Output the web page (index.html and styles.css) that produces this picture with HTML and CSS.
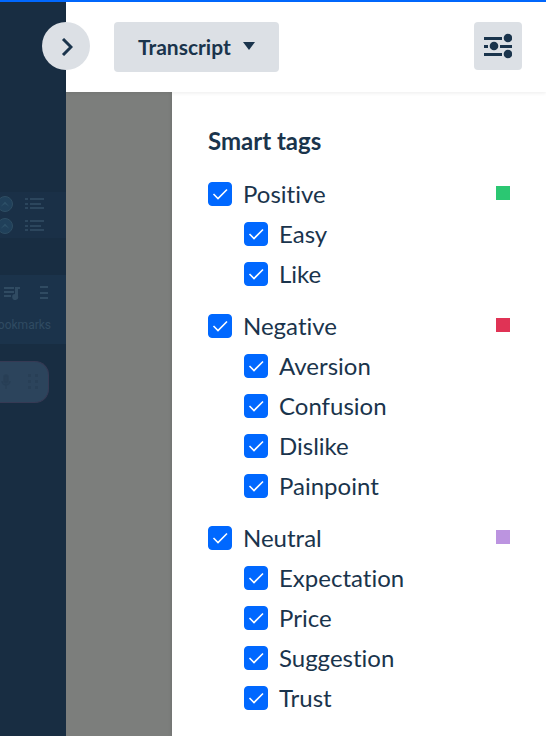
FILE: index.html
```html
<!DOCTYPE html>
<html lang="en">
<head>
  <meta charset="UTF-8">
  <meta name="viewport" content="width=device-width, initial-scale=1.0">
  <title>Transcript</title>
  <link rel="stylesheet" href="styles.css">
</head>
<body>
  <div class="page">
    <aside class="preview">
      <div class="preview-list">
        <div class="preview-row">
          <span class="compass"><svg width="16" height="16" viewBox="0 0 16 16"><path d="M3 11l5-6 5 6-5-3z" fill="#2d5068"/></svg></span>
          <svg width="20" height="12" viewBox="0 0 20 12" fill="#2c465d"><path d="M0 0h3v2H0zM5 0h14v2H5zM0 5h3v2H0zM5 5h11v2H5zM0 9h3v2H0zM5 9h14v2H5z"/></svg>
        </div>
        <div class="preview-row">
          <span class="compass"><svg width="16" height="16" viewBox="0 0 16 16"><path d="M3 11l5-6 5 6-5-3z" fill="#2d5068"/></svg></span>
          <svg width="20" height="12" viewBox="0 0 20 12" fill="#2c465d"><path d="M0 0h3v2H0zM5 0h14v2H5zM0 5h3v2H0zM5 5h11v2H5zM0 9h3v2H0zM5 9h14v2H5z"/></svg>
        </div>
      </div>
      <div class="preview-tabs">
        <div class="preview-icons">
          <svg width="16" height="14" viewBox="0 0 16 14" fill="#304b62"><path d="M0 1h10v2H0zM0 5h10v2H0zM0 9h7v2H0zM11 1h5v2h-2v7a3 3 0 1 1-3-2z"/></svg>
          <svg width="9" height="14" viewBox="0 0 9 14" fill="#304b62"><path d="M1 0h8v2H1zM1 6h8v2H1zM1 11h8v2H1z"/></svg>
        </div>
        <span class="preview-label">Bookmarks</span>
      </div>
      <div class="preview-recorder">
        <svg width="12" height="16" viewBox="0 0 12 16" fill="none" stroke="#283f56" stroke-width="1.5"><rect x="4" y="1" width="4" height="8" rx="2" fill="#283f56"/><path d="M2 7a4 4 0 0 0 8 0M6 11v4"/></svg>
        <svg width="12" height="16" viewBox="0 0 12 16" fill="#283f56"><path d="M1 0h3v3H1zM8 0h3v3H8zM1 6h3v3H1zM8 6h3v3H8zM1 12h3v3H1zM8 12h3v3H8z"/></svg>
      </div>
    </aside>

    <main class="drawer">
      <button class="drawer-toggle" type="button" aria-label="Close panel">
        <svg width="12" height="18" viewBox="0 0 12 18" fill="none" stroke="#1a344c" stroke-width="3"><path d="M2 1l8 8-8 8"/></svg>
      </button>
      <header class="toolbar">
        <button class="transcript-button" type="button">
          Transcript
          <svg width="12" height="8" viewBox="0 0 12 8" fill="#1a344c"><path d="M0 0h12L6 8z"/></svg>
        </button>
        <button class="filter-button" type="button" aria-label="Filters">
          <svg width="28" height="26" viewBox="0 0 28 26" fill="#1a344c">
            <path d="M0 4h18v3H0zM0 12h4v3H0zM16 12h12v3H16zM0 20h18v3H0z"/>
            <circle cx="24" cy="5" r="4.300"/>
            <circle cx="10" cy="13" r="4.300"/>
            <circle cx="24" cy="21" r="4.300"/>
          </svg>
        </button>
      </header>

      <div class="content">
        <div class="backdrop"></div>
        <form class="tags">
          <h2 class="heading">Smart tags</h2>
          <div class="tag-groups">
            <div class="tag-group">
              <div class="tag"><input type="checkbox" id="positive" checked><label for="positive">Positive</label><span class="swatch positive"></span></div>
              <div class="tag child"><input type="checkbox" id="easy" checked><label for="easy">Easy</label></div>
              <div class="tag child"><input type="checkbox" id="like" checked><label for="like">Like</label></div>
            </div>
            <div class="tag-group">
              <div class="tag"><input type="checkbox" id="negative" checked><label for="negative">Negative</label><span class="swatch negative"></span></div>
              <div class="tag child"><input type="checkbox" id="aversion" checked><label for="aversion">Aversion</label></div>
              <div class="tag child"><input type="checkbox" id="confusion" checked><label for="confusion">Confusion</label></div>
              <div class="tag child"><input type="checkbox" id="dislike" checked><label for="dislike">Dislike</label></div>
              <div class="tag child"><input type="checkbox" id="painpoint" checked><label for="painpoint">Painpoint</label></div>
            </div>
            <div class="tag-group">
              <div class="tag"><input type="checkbox" id="neutral" checked><label for="neutral">Neutral</label><span class="swatch neutral"></span></div>
              <div class="tag child"><input type="checkbox" id="expectation" checked><label for="expectation">Expectation</label></div>
              <div class="tag child"><input type="checkbox" id="price" checked><label for="price">Price</label></div>
              <div class="tag child"><input type="checkbox" id="suggestion" checked><label for="suggestion">Suggestion</label></div>
              <div class="tag child"><input type="checkbox" id="trust" checked><label for="trust">Trust</label></div>
            </div>
          </div>
        </form>
      </div>
    </main>
  </div>
</body>
</html>
```
FILE: styles.css
```css
* {
  box-sizing: border-box;
}
body {
  margin: 0;
  font-family: Lato, "Liberation Sans", sans-serif;
  font-variant-ligatures: none;
  color: #1a344c;
}
svg {
  display: block;
  flex-shrink: 0;
}
.page {
  display: flex;
  min-height: 100vh;
  border-top: 2px solid #0068ff;
}

/* dimmed page behind the drawer */
.preview {
  flex: 0 0 66px;
  padding-top: 190px;
  background: #182d42;
  overflow: hidden;
}
.preview-list {
  padding: 1px 0;
  background: #1a3047;
}
.preview-row {
  display: flex;
  align-items: center;
  gap: 12px;
  height: 22px;
  margin-left: -3px;
}
.compass {
  border: 1px solid #2e4d62;
  border-radius: 50%;
  background: #20405a;
}
.compass svg {
  width: 14px;
  height: 14px;
}
.preview-tabs {
  display: flex;
  flex-direction: column;
  gap: 17px;
  margin-top: 37px;
  padding: 11px 15px 11px 4px;
  background: #1b334b;
}
.preview-icons {
  display: flex;
  gap: 19px;
}
.preview-label {
  align-self: flex-end;
  font-family: Roboto, sans-serif;
  font-size: 12px;
  line-height: 16px;
  color: #304b62;
}
.preview-recorder {
  display: flex;
  align-items: center;
  gap: 15px;
  width: 49px;
  height: 42px;
  margin-top: 17px;
  border: 1px solid #363a54;
  border-left: none;
  border-radius: 0 14px 14px 0;
  background: #2c445c;
}

.drawer {
  position: relative;
  display: flex;
  flex-direction: column;
  flex: 1;
  min-width: 0;
}
button {
  border: none;
  background: #dce0e5;
  color: inherit;
  font-family: inherit;
  cursor: pointer;
}
.drawer-toggle {
  position: absolute;
  top: 20px;
  left: -24px;
  z-index: 2;
  display: flex;
  align-items: center;
  justify-content: center;
  width: 48px;
  height: 48px;
  padding: 2px 0 0 2px;
  border-radius: 50%;
}
.toolbar {
  position: relative;
  z-index: 1;
  display: flex;
  align-items: flex-start;
  justify-content: space-between;
  padding: 20px 24px 20px 48px;
  background: white;
  box-shadow: 0 1px 4px rgba(0, 0, 0, 0.08);
}
.transcript-button {
  display: flex;
  align-items: center;
  gap: 12px;
  height: 50px;
  padding: 0 24px 2px;
  border-radius: 4px;
  font-size: 21px;
  font-weight: bold;
}
.filter-button {
  display: flex;
  align-items: center;
  justify-content: center;
  width: 48px;
  height: 48px;
  padding: 0;
  border-radius: 4px;
}

.content {
  display: flex;
  flex: 1;
}
.backdrop {
  flex: 0 0 106px;
  background: #7c7e7c;
}
.tags {
  flex: 1;
  padding: 35px 36px 18px;
  background: white;
  box-shadow: 0 0 4px rgba(0, 0, 0, 0.15);
}
.heading {
  margin: 0 0 19px;
  font-size: 24px;
  line-height: 28px;
}
.tag-groups {
  display: flex;
  flex-direction: column;
  gap: 12px;
}
.tag {
  display: flex;
  align-items: center;
  gap: 11px;
  height: 40px;
  font-size: 24px;
}
.tag.child {
  padding-left: 36px;
}
.tag label {
  padding-bottom: 2px;
}
.tag input {
  appearance: none;
  width: 24px;
  height: 24px;
  margin: 0;
  border: 1px solid #0068ff;
  border-radius: 4px;
}
.tag input:checked {
  background: #0068ff url("data:image/svg+xml,%3Csvg xmlns='http://www.w3.org/2000/svg' viewBox='0 0 22 22'%3E%3Cpath d='M4.500 11l4.500 4.500L18 6.500' fill='none' stroke='white' stroke-width='1.600'/%3E%3C/svg%3E") center / 22px no-repeat;
}
.swatch {
  width: 14px;
  height: 14px;
  margin: 0 0 2px auto;
}
.positive {
  background: #2bc772;
}
.negative {
  background: #e03355;
}
.neutral {
  background: #bc94e0;
}
```
